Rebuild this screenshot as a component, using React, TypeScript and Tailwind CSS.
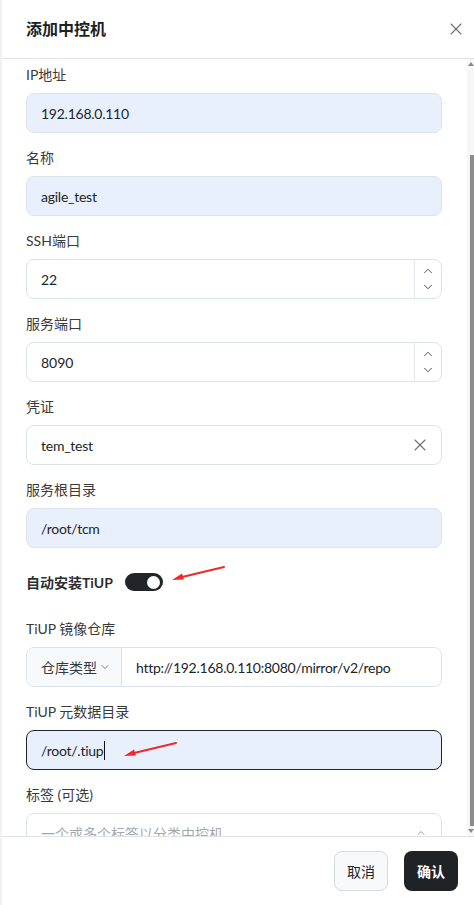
import { X, ChevronUp, ChevronDown } from "lucide-react";

const font = { fontFamily: 'Lato, "Noto Sans CJK SC", sans-serif' };

function Label({ children }: { children: React.ReactNode }) {
  return <div className="h-5 mb-2 text-[14px] leading-5 text-[#3a3a3a]">{children}</div>;
}

function Field({ label, children }: { label: string; children: React.ReactNode }) {
  return (
    <div className="mb-[15px]">
      <Label>{label}</Label>
      {children}
    </div>
  );
}

function FilledInput({ value }: { value: string }) {
  return (
    <div className="h-10 rounded-lg border border-[#dde3ea] bg-[#e8f0fe] px-[14px] flex items-center text-[14px] tracking-[-0.25px] text-[#212529]">
      {value}
    </div>
  );
}

function NumberInput({ value }: { value: string }) {
  return (
    <div className="h-10 rounded-lg border border-[#dde3ea] bg-white flex items-stretch text-[14px] text-[#212529]">
      <div className="flex-1 flex items-center px-[14px]">{value}</div>
      <div className="w-[27px] border-l border-[#e3e7eb] flex flex-col items-center justify-center gap-[2px] text-[#444]">
        <ChevronUp size={14} strokeWidth={1.6} />
        <ChevronDown size={14} strokeWidth={1.6} />
      </div>
    </div>
  );
}

function RedArrow({ className }: { className: string }) {
  return (
    <svg className={`absolute pointer-events-none ${className}`} width="56" height="16" viewBox="0 0 56 16">
      <path d="M54 1 L10 11.5" stroke="#f0292a" strokeWidth="2" strokeLinecap="round" />
      <path d="M2 14 L12 7.5 L14 13.5 Z" fill="#f0292a" />
    </svg>
  );
}

export default function App() {
  return (
    <div style={font} className="w-[474px] h-[905px] bg-white border-l-2 border-[#f1f2f3] flex flex-col overflow-hidden">
      {/* 标题 */}
      <header className="h-[59px] shrink-0 flex items-center justify-between pl-6 pr-[8px] border-b border-[#dfe3e6]">
        <h2 className="text-[16px] font-bold text-[#1c1f23]">添加中控机</h2>
        <X size={20} strokeWidth={1.3} className="text-[#6c6f73]" />
      </header>

      {/* 表单 */}
      <div className="relative flex-1 overflow-hidden pl-6 pr-8 pt-[6px]">
        <Field label="IP地址">
          <FilledInput value="192.168.0.110" />
        </Field>
        <Field label="名称">
          <FilledInput value="agile_test" />
        </Field>
        <Field label="SSH端口">
          <NumberInput value="22" />
        </Field>
        <Field label="服务端口">
          <NumberInput value="8090" />
        </Field>
        <Field label="凭证">
          <div className="h-10 rounded-lg border border-[#dde3ea] bg-white flex items-center justify-between pl-[14px] pr-[11px] text-[14px] tracking-[-0.25px] text-[#212529]">
            <span>tem_test</span>
            <X size={20} strokeWidth={1.3} className="text-[#6c6f73]" />
          </div>
        </Field>
        <Field label="服务根目录">
          <FilledInput value="/root/tcm" />
        </Field>

        <div className="relative h-[38px] mb-[18px] flex items-center gap-[12px]">
          <span className="text-[14px] font-bold text-[#2b2f33]">自动安装TiUP</span>
          <div className="w-[38px] h-[18px] rounded-full bg-[#212529] flex items-center justify-end pr-[3px]">
            <div className="w-[13px] h-[13px] rounded-full bg-white" />
          </div>
          <RedArrow className="left-[144px] top-[3px]" />
        </div>

        <Field label="TiUP 镜像仓库">
          <div className="h-10 rounded-lg border border-[#dde3ea] bg-white flex items-stretch text-[14px] text-[#212529] overflow-hidden">
            <div className="w-[95px] shrink-0 bg-[#f8f9fa] border-r border-[#dde3ea] flex items-center pl-[14px] gap-[2px] text-[#343a40]">
              仓库类型
              <ChevronDown size={12} strokeWidth={1.5} className="text-[#555]" />
            </div>
            <div className="flex-1 flex items-center pl-[14px] whitespace-nowrap tracking-[-0.25px]">http://192.168.0.110:8080/mirror/v2/repo</div>
          </div>
        </Field>

        <Field label="TiUP 元数据目录">
          <div className="relative h-10 rounded-lg border border-[#212529] bg-[#e8f0fe] px-[14px] flex items-center text-[14px] tracking-[-0.25px] text-[#212529]">
            <span>/root/.tiup</span>
            <span className="w-px h-[19px] bg-[#111] ml-px" />
            <RedArrow className="left-[95px] top-[11px]" />
          </div>
        </Field>

        <Field label="标签 (可选)">
          <div className="h-10 rounded-lg border border-[#dde3ea] bg-white flex items-center justify-between pl-[14px] pr-[14px] text-[14px]">
            <span className="text-[#a3a8ad]">一个或多个标签以分类中控机</span>
            <ChevronUp size={12} strokeWidth={1.5} className="text-[#777]" />
          </div>
        </Field>

        {/* 滚动条 */}
        <div className="absolute right-0 top-0 bottom-0 w-[7px] bg-[#f7f7f7] flex flex-col items-end">
          <div className="h-[10px] w-full flex items-center justify-end">
            <div className="w-0 h-0 border-l-[3px] border-r-[3px] border-b-[4px] border-l-transparent border-r-transparent border-b-[#8a8a8a]" />
          </div>
          <div className="mt-[86px] w-[4px] flex-1 bg-[#8c8c8c]" />
          <div className="h-[10px] w-full flex items-center justify-end">
            <div className="w-0 h-0 border-l-[3px] border-r-[3px] border-t-[4px] border-l-transparent border-r-transparent border-t-[#8a8a8a]" />
          </div>
        </div>
      </div>

      {/* 底部按钮 */}
      <footer className="h-[69px] shrink-0 border-t border-[#dfe3e6] flex items-center justify-end gap-4 pr-4">
        <button className="h-10 w-[54px] rounded-lg border border-[#d5dadf] bg-[#f8f9fa] text-[14px] text-[#212529]">取消</button>
        <button className="h-10 w-[54px] rounded-lg bg-[#1f2326] text-[14px] font-bold text-white">确认</button>
      </footer>
    </div>
  );
}
